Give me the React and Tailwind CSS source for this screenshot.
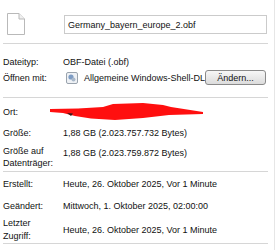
import React from 'react';

const font = { fontFamily: '"Liberation Sans", Arial, sans-serif' };

function FileIcon() {
  return (
    <svg width="20" height="24" viewBox="0 0 20 24">
      <path d="M1.5 1.5 H13 L18.5 7 V22.5 H1.5 Z" fill="#ffffff" stroke="#b9b9b9" />
      <path d="M13 1.5 V7 H18.5" fill="#f0f0f0" stroke="#b9b9b9" />
    </svg>
  );
}

function ShellIcon() {
  return (
    <svg width="12" height="12" viewBox="0 0 12 12">
      <rect x="0.5" y="0.5" width="11" height="11" rx="1.5" fill="#eef1f5" stroke="#9aa3ad" />
      <circle cx="5" cy="5" r="2.6" fill="#7d9cc4" />
      <circle cx="7.5" cy="7.5" r="2" fill="#a9b8c9" />
    </svg>
  );
}

function Separator() {
  return <div className="w-[265px] h-px bg-[#d6d6d6]" />;
}

function Row({ label, children, className = '' }) {
  return (
    <div className={`flex items-center ${className}`}>
      <div className="w-[60px] shrink-0">{label}</div>
      <div className="flex-1 whitespace-nowrap">{children}</div>
    </div>
  );
}

export default function App() {
  return (
    <div className="w-[280px] h-[250px] bg-white overflow-hidden text-[9px] text-[#111111] leading-[12px]" style={font}>
      <div className="w-[275px] h-[250px] pl-[3px] border-r border-[#e6e6e6]">
        <div className="flex items-start h-[43px] pt-[12px]">
          <div className="w-[61px] pl-[3px]">
            <FileIcon />
          </div>
          <div className="w-[203px] h-[19px] mt-[3px] border border-[#cbcbcb] flex items-center pl-[3px]">
            Germany_bayern_europe_2.obf
          </div>
        </div>
        <Separator />

        <Row label="Dateityp:" className="h-[16px] mt-[10px]">
          OBF-Datei (.obf)
        </Row>
        <Row label="Öffnen mit:" className="h-[15px]">
          <div className="flex items-center">
            <div className="ml-[3px] w-[12px] h-[12px]">
              <ShellIcon />
            </div>
            <div className="ml-[6px] w-[120px]">Allgemeine Windows-Shell-DL</div>
            <button className="ml-[1px] w-[61px] h-[15px] rounded-[3px] border border-[#8a8a8a] bg-gradient-to-b from-[#f7f7f7] to-[#dcdcdc] flex items-center justify-center text-[9px] text-[#111111]">
              Ändern...
            </button>
          </div>
        </Row>
        <div className="mt-[12px]">
          <Separator />
        </div>

        <Row label="Ort:" className="h-[16px] mt-[6px]">
          <div className="relative h-[16px]">
            <svg className="absolute left-[-16px] top-[-2px]" width="160" height="20" viewBox="44 100 160 20">
              <path
                d="M47 107 L75 106.5 L100 105 L110 102 L140 101 L160 103 L168 105 L200 110 L200 112 L166 113 L140 116 L112 118 L88 116.5 L72 114 L60 111 L47 110 Z"
                fill="#ff0f0f"
              />
              <path d="M64 111 L70 111.5 L68 114 Z" fill="#3a1a1a" />
            </svg>
          </div>
        </Row>
        <Row label="Größe:" className="h-[16px] mt-[5px]">
          1,88 GB (2.023.757.732 Bytes)
        </Row>
        <div className="flex items-start mt-[4px]">
          <div className="w-[60px] shrink-0">
            Größe auf
            <br />
            Datenträger:
          </div>
          <div className="pt-[2px] whitespace-nowrap">1,88 GB (2.023.759.872 Bytes)</div>
        </div>
        <div className="mt-[2px]">
          <Separator />
        </div>

        <Row label="Erstellt:" className="h-[16px] mt-[4px]">
          Heute, 26. Oktober 2025, Vor 1 Minute
        </Row>
        <Row label="Geändert:" className="h-[16px] mt-[6px]">
          Mittwoch, 1. Oktober 2025, 02:00:00
        </Row>
        <Row label={<span className="block leading-[13px]">Letzter<br />Zugriff:</span>} className="mt-[2px] h-[27px]">
          Heute, 26. Oktober 2025, Vor 1 Minute
        </Row>
        <Separator />
      </div>
    </div>
  );
}
